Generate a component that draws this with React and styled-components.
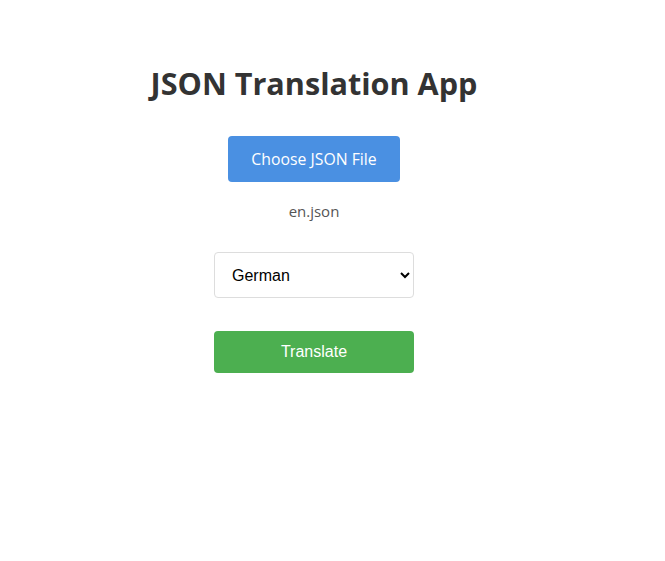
import React, { useState } from "react";
import styled, { createGlobalStyle } from "styled-components";

const GlobalStyle = createGlobalStyle`
  body {
    margin: 0;
    background: #fff;
    font-family: "Open Sans", "Noto Sans", sans-serif;
  }
`;

const Page = styled.div`
  width: 600px;
  padding: 64px 14px 0;
  display: flex;
  flex-direction: column;
  align-items: center;
`;

const Title = styled.h1`
  margin: 0;
  font-size: 30.6px;
  line-height: 38px;
  font-weight: 700;
  color: #333;
`;

const FileButton = styled.label`
  margin-top: 34px;
  width: 172px;
  height: 46px;
  box-sizing: border-box;
  display: flex;
  align-items: center;
  justify-content: center;
  background: #4a90e2;
  color: #fff;
  border-radius: 4px;
  font-size: 15.8px;
  cursor: pointer;
  input {
    display: none;
  }
`;

const FileName = styled.p`
  margin: 19px 0 0;
  font-size: 15px;
  line-height: 20px;
  color: #555;
`;

const Select = styled.select`
  margin-top: 31px;
  width: 200px;
  height: 46px;
  padding: 0 10px 0 13px;
  border: 1px solid #ddd;
  border-radius: 4px;
  background: #fff;
  font-family: "Liberation Sans", Arial, sans-serif;
  font-size: 16px;
  color: #000;
`;

const ActionButton = styled.button`
  margin-top: 33px;
  width: 200px;
  height: 42px;
  border: none;
  border-radius: 4px;
  background: ${(p) => p.$bg || "#4caf50"};
  color: #fff;
  font-family: "Liberation Sans", Arial, sans-serif;
  font-size: 16px;
  cursor: pointer;
`;

export default function App() {
  const [lang, setLang] = useState("German");
  return (
    <>
      <GlobalStyle />
      <Page>
        <Title>JSON Translation App</Title>
        <FileButton>
          Choose JSON File
          <input type="file" accept=".json" />
        </FileButton>
        <FileName>en.json</FileName>
        <Select value={lang} onChange={(e) => setLang(e.target.value)}>
          <option>German</option>
          <option>French</option>
          <option>Spanish</option>
          <option>Italian</option>
        </Select>
        <ActionButton>Translate</ActionButton>
      </Page>
    </>
  );
}
